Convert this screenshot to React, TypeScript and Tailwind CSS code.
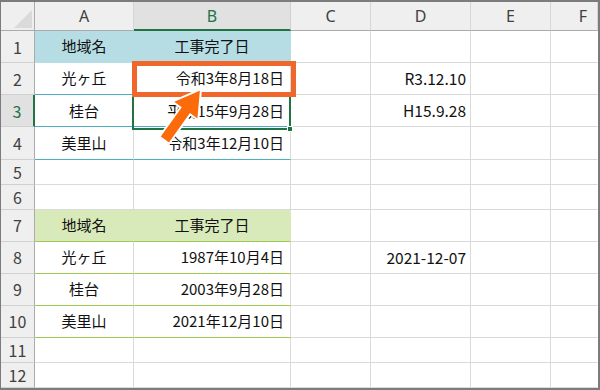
import React from 'react'

const W = ['w-[34px]', 'w-[99px]', 'w-[157px]', 'w-[80px]', 'w-[100px]', 'w-[80px]', 'flex-1']

interface CellProps {
  w: string
  bg?: string
  bottom?: string
  right?: string
  align?: string
  children?: React.ReactNode
}

function Cell({ w, bg = 'bg-white', bottom = 'border-b-[#dadada]', right = 'border-r-[#dadada]', align = 'justify-center', children }: CellProps) {
  return (
    <div className={`flex shrink-0 items-center border-b border-r ${w} ${bg} ${bottom} ${right} ${align}`}>
      {children}
    </div>
  )
}

function RowNum({ n, selected }: { n: number; selected?: boolean }) {
  if (selected) {
    return (
      <div className="flex w-[34px] shrink-0 items-center justify-center border-b border-r-2 border-b-[#d0d0d0] border-r-[#217346] bg-[#e1e1e1] text-[16px] text-[#217346]">
        {n}
      </div>
    )
  }
  return (
    <div className="flex w-[34px] shrink-0 items-center justify-center border-b border-r border-b-[#d0d0d0] border-r-[#ababab] bg-[#efefef] text-[16px] text-[#404040]">
      {n}
    </div>
  )
}

type Row = {
  h: string
  kind: 'blueHead' | 'blue' | 'greenHead' | 'green' | 'plain'
  a?: string
  b?: string
  d?: string
}

const rows: Row[] = [
  { h: 'h-[33px]', kind: 'blueHead', a: '地域名', b: '工事完了日' },
  { h: 'h-[33px]', kind: 'blue', a: '光ヶ丘', b: '令和3年8月18日', d: 'R3.12.10' },
  { h: 'h-[33px]', kind: 'blue', a: '桂台', b: '平成15年9月28日', d: 'H15.9.28' },
  { h: 'h-[33px]', kind: 'blue', a: '美里山', b: '令和3年12月10日' },
  { h: 'h-[25px]', kind: 'plain' },
  { h: 'h-[25px]', kind: 'plain' },
  { h: 'h-[33px]', kind: 'greenHead', a: '地域名', b: '工事完了日' },
  { h: 'h-[33px]', kind: 'green', a: '光ヶ丘', b: '1987年10月4日', d: '2021-12-07' },
  { h: 'h-[33px]', kind: 'green', a: '桂台', b: '2003年9月28日' },
  { h: 'h-[33px]', kind: 'green', a: '美里山', b: '2021年12月10日' },
  { h: 'h-[25px]', kind: 'plain' },
  { h: 'h-[25px]', kind: 'plain' },
]

function SheetRow({ row, n }: { row: Row; n: number }) {
  let aCell: React.ReactNode
  let bCell: React.ReactNode
  if (row.kind === 'blueHead') {
    aCell = <Cell w={W[1]} bg="bg-[#b6dde4]" bottom="border-b-[#b6dde4]" right="border-r-[#b6dde4]">{row.a}</Cell>
    bCell = <Cell w={W[2]} bg="bg-[#b6dde4]" bottom="border-b-[#b6dde4]" right="border-r-[#b6dde4]">{row.b}</Cell>
  } else if (row.kind === 'greenHead') {
    aCell = <Cell w={W[1]} bg="bg-[#d8eab9]" bottom="border-b-[#9fca4f]" right="border-r-[#d8eab9]">{row.a}</Cell>
    bCell = <Cell w={W[2]} bg="bg-[#d8eab9]" bottom="border-b-[#9fca4f]" right="border-r-[#d8eab9]">{row.b}</Cell>
  } else if (row.kind === 'blue') {
    aCell = <Cell w={W[1]} bottom="border-b-[#4eadbf]">{row.a}</Cell>
    bCell = <Cell w={W[2]} bottom="border-b-[#4eadbf]" align="justify-end pr-[6px]">{row.b}</Cell>
  } else if (row.kind === 'green') {
    aCell = <Cell w={W[1]} bottom="border-b-[#9fca4f]">{row.a}</Cell>
    bCell = <Cell w={W[2]} bottom="border-b-[#9fca4f]" align="justify-end pr-[6px]">{row.b}</Cell>
  } else {
    aCell = <Cell w={W[1]} />
    bCell = <Cell w={W[2]} />
  }

  return (
    <div className={`flex ${row.h}`}>
      <RowNum n={n} selected={n === 3} />
      {aCell}
      {bCell}
      <Cell w={W[3]} />
      <Cell w={W[4]} align="justify-end pr-[4px] text-[15.5px]">{row.d}</Cell>
      <Cell w={W[5]} />
      <Cell w={W[6]} right="border-r-transparent" />
    </div>
  )
}

function ColHead({ w, label, selected }: { w: string; label?: string; selected?: boolean }) {
  if (selected) {
    return (
      <div className={`flex shrink-0 items-center justify-center border-b-2 border-r border-b-[#217346] border-r-[#d0d0d0] bg-[#e1e1e1] text-[16px] text-[#217346] ${w}`}>
        {label}
      </div>
    )
  }
  return (
    <div className={`flex shrink-0 items-center justify-center border-b border-r border-b-[#ababab] border-r-[#d6d6d6] bg-[#efefef] text-[16px] text-[#404040] ${w}`}>
      {label}
    </div>
  )
}

export default function App() {
  return (
    <div className="relative h-[390px] w-[600px] overflow-hidden bg-white">
      <div className="flex h-full flex-col overflow-hidden border-b-2 border-l border-r-2 border-t-2 border-[#7c7c7c] font-['Noto_Sans_CJK_JP',sans-serif] text-[15px] text-[#111]">
        <div className="flex h-[29px] shrink-0 font-['Noto_Sans',sans-serif]">
          <div className="relative w-[34px] shrink-0 border-b border-r border-b-[#ababab] border-r-[#ababab] bg-[#efefef]">
            <svg className="absolute bottom-[2px] right-[2px]" width="18" height="18" viewBox="0 0 18 18">
              <polygon points="18,0 18,18 0,18" fill="#dadada" />
            </svg>
          </div>
          <ColHead w={W[1]} label="A" />
          <ColHead w={W[2]} label="B" selected />
          <ColHead w={W[3]} label="C" />
          <ColHead w={W[4]} label="D" />
          <ColHead w={W[5]} label="E" />
          <ColHead w="flex-1 justify-end pr-[10px]" label="F" />
        </div>
        {rows.map((row, i) => (
          <SheetRow key={i} row={row} n={i + 1} />
        ))}
      </div>

      {/* active cell B3 */}
      <div className="pointer-events-none absolute left-[132px] top-[95px] h-[35px] w-[159px] border-2 border-[#217346]" />
      <div className="pointer-events-none absolute left-[287px] top-[126px] h-[6px] w-[6px] border border-white bg-[#217346]" />

      {/* callout box */}
      <div className="pointer-events-none absolute left-[132px] top-[61px] h-[36px] w-[164px] border-[5px] border-[#f0672b]" />

      <svg className="pointer-events-none absolute left-0 top-0" width="600" height="390">
        <g transform="translate(201 89) rotate(35.6)">
          <polygon
            points="0,0 16,27 6,27 6,63 -6,63 -6,27 -16,27"
            fill="#fb6a0b"
            stroke="#ffffff"
            strokeWidth="2"
            strokeLinejoin="miter"
          />
        </g>
      </svg>
    </div>
  )
}
